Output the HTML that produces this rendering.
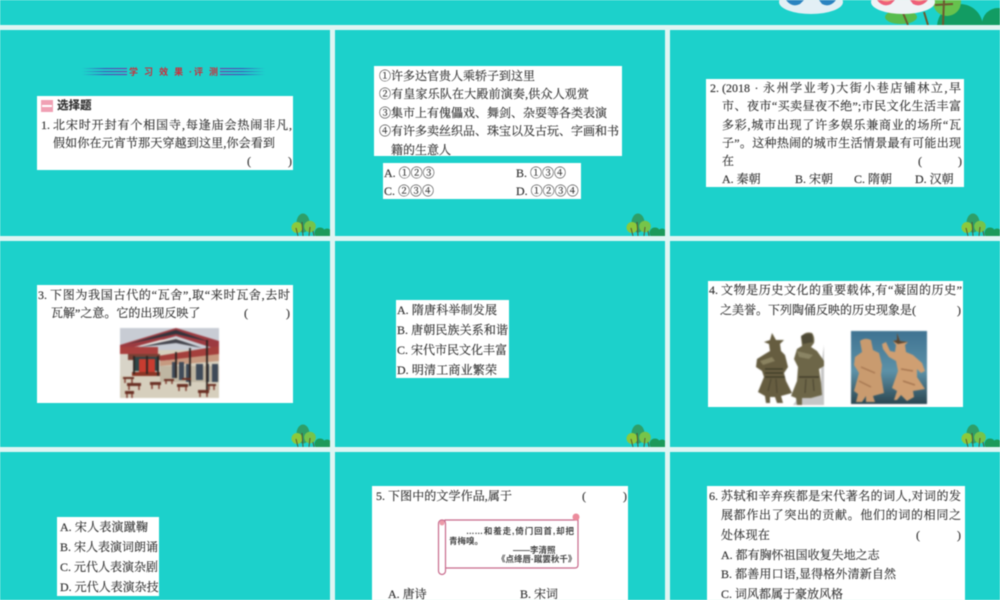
<!DOCTYPE html>
<html lang="zh">
<head>
<meta charset="utf-8">
<title>学习效果·评测</title>
<style>
html,body{margin:0;padding:0;background:#dff5f3}
#w{position:relative;width:1000px;height:600px;overflow:hidden;background:#dff5f3;filter:blur(.4px);font-family:"Liberation Serif","Noto Serif CJK SC",serif;color:#333;font-size:12px;-webkit-text-stroke:.15px #333}
.p{position:absolute;background:#1cd1cb}
.b{position:absolute;background:#fff}
.t{position:absolute;height:18px;line-height:18px;white-space:nowrap;text-align:justify;text-align-last:justify;text-justify:inter-character}
.l{position:absolute;height:18px;line-height:18px;white-space:nowrap}
.s{font-size:8.5px;height:16px;line-height:16px;font-weight:700;font-family:"Liberation Sans","Noto Sans CJK SC",sans-serif;-webkit-text-stroke:0;color:#444}
svg{position:absolute;overflow:hidden}
.im{filter:blur(.5px)}
</style>
</head>
<body>
<div id="w">
<svg width="0" height="0" style="position:absolute"><defs>
<symbol id="tree" viewBox="0 0 40 23">
<circle cx="30" cy="20" r="5.5" fill="#1c9a5a"/><circle cx="37" cy="20" r="4.5" fill="#1c9a5a"/>
<ellipse cx="13" cy="10" rx="6.5" ry="9.5" fill="#2e9f68"/>
<circle cx="7" cy="14.5" r="5.5" fill="#8cc93c"/>
<circle cx="20" cy="13.5" r="5.8" fill="#76c44a"/>
<path d="M8 23L6 15M13 23L12 9M19 23L20 14M24 23L23 18" stroke="#5a4a2a" stroke-width=".9" fill="none"/>
</symbol>
<linearGradient id="gl"><stop offset="0" stop-color="#3f55b8" stop-opacity="0"/><stop offset=".5" stop-color="#3f55b8"/><stop offset="1" stop-color="#7a35a8"/></linearGradient>
<linearGradient id="gr"><stop offset="0" stop-color="#7a35a8"/><stop offset=".5" stop-color="#3f55b8"/><stop offset="1" stop-color="#3f55b8" stop-opacity="0"/></linearGradient>
</defs></svg>

<div class="p" style="left:0;top:0;width:1000px;height:25px"></div>
<div class="p" style="left:0;top:30px;width:330px;height:206px"></div>
<div class="p" style="left:335px;top:30px;width:330px;height:206px"></div>
<div class="p" style="left:670px;top:30px;width:330px;height:206px"></div>
<div class="p" style="left:0;top:241px;width:330px;height:206px"></div>
<div class="p" style="left:335px;top:241px;width:330px;height:206px"></div>
<div class="p" style="left:670px;top:241px;width:330px;height:206px"></div>
<div class="p" style="left:0;top:452px;width:330px;height:148px"></div>
<div class="p" style="left:335px;top:452px;width:330px;height:148px"></div>
<div class="p" style="left:670px;top:452px;width:330px;height:148px"></div>

<!-- top decoration -->
<svg style="left:0;top:0" width="1000" height="25" viewBox="0 0 1000 25">
<ellipse cx="901" cy="17" rx="16" ry="7" fill="#58bc4d"/>
<circle cx="960" cy="27" r="23" fill="#129c63"/>
<circle cx="998" cy="24" r="16" fill="#129c63"/>
<ellipse cx="947" cy="2" rx="14" ry="14" fill="#66c24d"/>
<path d="M903 13l5 12M924 12l4 13M944 0l-1 25M935 5l18-1" stroke="#6d5a30" stroke-width="2" fill="none"/>
<ellipse cx="811" cy="2" rx="32" ry="12" fill="#e3eff5"/>
<path d="M786 0q6 8 14 4l4-4zM819 0l3 4q8 4 14-4z" fill="#2a83c0"/>
<ellipse cx="903" cy="2" rx="32" ry="12" fill="#eef2f5"/>
<path d="M877 0q6 8 14 4l4-4zM910 0l3 4q8 4 15-4z" fill="#ee5f79"/>
<path d="M881 0q5 3 9 1l2-1zM914 0q5 3 10 0z" fill="#f7a58c"/>
</svg>

<!-- trees -->
<svg style="left:290px;top:213px" width="40" height="23"><use href="#tree" width="40" height="23"/></svg>
<svg style="left:625px;top:213px" width="40" height="23"><use href="#tree" width="40" height="23"/></svg>
<svg style="left:960px;top:213px" width="40" height="23"><use href="#tree" width="40" height="23"/></svg>
<svg style="left:290px;top:424px" width="40" height="23"><use href="#tree" width="40" height="23"/></svg>
<svg style="left:625px;top:424px" width="40" height="23"><use href="#tree" width="40" height="23"/></svg>
<svg style="left:960px;top:424px" width="40" height="23"><use href="#tree" width="40" height="23"/></svg>

<!-- heading -->
<svg style="left:82px;top:67px" width="186" height="10" viewBox="0 0 186 10">
<rect x="0" y="1" width="45" height="1.1" fill="url(#gl)"/><rect x="0" y="4" width="45" height="1.1" fill="url(#gl)"/><rect x="0" y="7" width="45" height="1.1" fill="url(#gl)"/>
<rect x="138" y="1" width="45" height="1.1" fill="url(#gr)"/><rect x="138" y="4" width="45" height="1.1" fill="url(#gr)"/><rect x="138" y="7" width="45" height="1.1" fill="url(#gr)"/>
</svg>
<div class="t" style="left:129px;top:63px;width:89px;font-size:9px;font-weight:700;color:#c8303c;-webkit-text-stroke:0;font-family:'Liberation Sans','Noto Sans CJK SC',sans-serif">学 习 效 果 ·评 测</div>

<!-- box 1 -->
<div class="b" style="left:37px;top:96px;width:256px;height:74px"></div>
<div style="position:absolute;left:41px;top:100px;width:12px;height:12px;background:#f0a0b4"></div>
<div style="position:absolute;left:42px;top:105px;width:10px;height:1.5px;background:#fff"></div>
<div class="l" style="left:57px;top:97px;font-size:11.5px;font-weight:700;font-family:'Liberation Sans','Noto Sans CJK SC',sans-serif;color:#333">选择题</div>
<div class="l" style="left:41px;top:116px">1.</div>
<div class="t" style="left:53px;top:116px;width:239px">北宋时开封有个相国寺,每逢庙会热闹非凡,</div>
<div class="t" style="left:53px;top:134px;width:222px">假如你在元宵节那天穿越到这里,你会看到</div>
<div class="l" style="left:247px;top:152px">(</div><div class="l" style="left:288px;top:152px">)</div>

<!-- box 2 -->
<div class="b" style="left:374px;top:66px;width:248px;height:90px"></div>
<div class="t" style="left:379px;top:67px;width:155px">①许多达官贵人乘轿子到这里</div>
<div class="t" style="left:379px;top:85px;width:210px">②有皇家乐队在大殿前演奏,供众人观赏</div>
<div class="t" style="left:379px;top:104px;width:215px">③集市上有傀儡戏、舞剑、杂耍等各类表演</div>
<div class="t" style="left:379px;top:122px;width:239px">④有许多卖丝织品、珠宝以及古玩、字画和书</div>
<div class="t" style="left:391px;top:141px;width:59px">籍的生意人</div>
<div class="b" style="left:383px;top:163px;width:198px;height:36px"></div>
<div class="t" style="left:384px;top:164px;width:50px">A. ①②③</div>
<div class="t" style="left:516px;top:164px;width:49px">B. ①③④</div>
<div class="t" style="left:384px;top:182px;width:49px">C. ②③④</div>
<div class="t" style="left:516px;top:182px;width:62px">D. ①②③④</div>

<!-- box 3 -->
<div class="b" style="left:706px;top:79px;width:258px;height:108px"></div>
<div class="l" style="left:710px;top:79px">2.</div>
<div class="t" style="left:722px;top:79px;width:239px">(2018 · 永州学业考)大街小巷店铺林立,早</div>
<div class="t" style="left:722px;top:97px;width:239px">市、夜市“买卖昼夜不绝”;市民文化生活丰富</div>
<div class="t" style="left:722px;top:116px;width:239px">多彩,城市出现了许多娱乐兼商业的场所“瓦</div>
<div class="t" style="left:722px;top:134px;width:239px">子”。这种热闹的城市生活情景最有可能出现</div>
<div class="l" style="left:722px;top:152px">在</div>
<div class="l" style="left:918px;top:152px">(</div><div class="l" style="left:958px;top:152px">)</div>
<div class="t" style="left:722px;top:170px;width:38px">A. 秦朝</div>
<div class="t" style="left:795px;top:170px;width:37px">B. 宋朝</div>
<div class="t" style="left:854px;top:170px;width:37px">C. 隋朝</div>
<div class="t" style="left:915px;top:170px;width:38px">D. 汉朝</div>

<!-- box 4 -->
<div class="b" style="left:37px;top:285px;width:256px;height:118px"></div>
<div class="l" style="left:38px;top:286px">3.</div>
<div class="t" style="left:50px;top:286px;width:240px">下图为我国古代的“瓦舍”,取“来时瓦舍,去时</div>
<div class="t" style="left:51px;top:304px;width:148px">瓦解”之意。它的出现反映了</div>
<div class="l" style="left:244px;top:304px">(</div><div class="l" style="left:286px;top:304px">)</div>
<svg class="im" style="left:120px;top:328px" width="99" height="70" viewBox="0 0 99 70">
<rect width="99" height="70" fill="#d6cfbd"/>
<rect width="99" height="22" fill="#c8ccd4"/>
<path d="M0 17L56 0L99 13V22L56 8L0 24Z" fill="#9c3a40"/>
<path d="M8 16L56 2L90 14L56 6Z" fill="#33343c"/>
<path d="M14 19L40 12L56 10L86 18L62 12L36 16Z" fill="#e4e0dc"/>
<path d="M20 19L56 11L82 20L56 15Z" fill="#44444c"/>
<path d="M0 19H38V26H0Z" fill="#a9403e"/>
<path d="M38 28L99 18V28L38 33Z" fill="#a4403c"/>
<path d="M40 33L99 26V33L40 38Z" fill="#c69a80"/>
<rect x="0" y="26" width="40" height="22" fill="#d8d4c8"/>
<rect x="8" y="26" width="32" height="6" fill="#7a4034"/>
<rect x="14" y="29" width="25" height="14" fill="#2d4648"/>
<rect x="19" y="31" width="16" height="15" fill="#c83c30"/>
<rect x="12" y="44" width="30" height="4" fill="#8a3424"/>
<rect x="40" y="38" width="59" height="16" fill="#bfb6a2"/>
<path d="M52 34h5v16h-5zM59 34h5v18h-5zM66 36h4v18h-4zM76 36h7v16h-7zM86 36h3v18h-3zM92 36h6v18h-6z" fill="#3f4a58"/>
<path d="M87 12V66M70 20V58M56 24V50M38 28V48M14 28V46M27 28V46" stroke="#2b2320" stroke-width="1.8" fill="none"/>
<path d="M3 49h11v2H3zM7 55h14v3H7zM30 54h11v3H30zM44 51h10v2H44zM57 56h11v3H57zM62 50h9v2H62zM78 62h11v3H78zM87 56h9v2H87zM5 63h9v3H5z" fill="#6a3024"/>
<path d="M5 51v4M12 51v4M9 58v4M19 58v4M32 57v4M39 57v4M46 53v3M52 53v3M59 59v4M66 59v4M80 65v4M87 65v4M89 58v4M94 58v4M7 66v4M12 66v4" stroke="#7a3528" stroke-width="1.4"/>
</svg>

<!-- box 5 -->
<div class="b" style="left:396px;top:300px;width:113px;height:78px"></div>
<div class="t" style="left:397px;top:301px;width:100px">A. 隋唐科举制发展</div>
<div class="t" style="left:397px;top:321px;width:111px">B. 唐朝民族关系和谐</div>
<div class="t" style="left:397px;top:341px;width:110px">C. 宋代市民文化丰富</div>
<div class="t" style="left:397px;top:361px;width:100px">D. 明清工商业繁荣</div>

<!-- box 6 -->
<div class="b" style="left:708px;top:281px;width:255px;height:126px"></div>
<div class="l" style="left:709px;top:281px">4.</div>
<div class="t" style="left:721px;top:281px;width:241px">文物是历史文化的重要载体,有“凝固的历史”</div>
<div class="t" style="left:720px;top:301px;width:196px">之美誉。下列陶俑反映的历史现象是(</div>
<div class="l" style="left:957px;top:301px">)</div>
<svg class="im" style="left:755px;top:331px" width="70" height="76" viewBox="0 0 70 76">
<path d="M69 14V74H38L44 66L66 60V36Z" fill="#c6c6c6"/>
<path d="M46 6Q50 0 57 2Q60 6 59 12L56 16L62 20L69 30L69 35L64 38L66 52L67 64L56 67H47V74H42L41 67L36 65L42 50L43 36L39 28L42 18L47 15Z" fill="#6d6648"/>
<path d="M17 2L21 9L29 9L25 13L26 20L30 24L33 36L29 42L31 50L37 62L26 65L28 72H22L20 66H15V72H11L10 65L3 61L9 46L7 40L1 36L2 28L10 23L15 20L14 13L9 11L15 9Z" fill="#665d40"/>
<path d="M46 5Q50 2 57 3L58 11L48 13Z" fill="#4e4a36"/>
<path d="M42 20L58 24L54 28L44 26Z" fill="#8a8464"/>
<path d="M10 38h18M10 42h18M10 46h20M44 46h20" stroke="#3c3826" stroke-width="1.2"/>
<path d="M5 30L17 26L20 30L8 34Z" fill="#8a8260"/>
<path d="M13 60L16 48M22 62L21 48M50 62L51 48M59 60L58 48" stroke="#4a4430" stroke-width="1"/>
</svg>
<svg class="im" style="left:851px;top:331px" width="76" height="73" viewBox="0 0 76 73">
<defs><linearGradient id="bg" x1="0" y1="0" x2="0" y2="1"><stop offset="0" stop-color="#3f7392"/><stop offset=".55" stop-color="#5d92a8"/><stop offset="1" stop-color="#2b4650"/></linearGradient></defs>
<rect width="76" height="73" fill="url(#bg)"/>
<path d="M9 10Q14 6 20 9L22 19L28 22L31 34L30 44L33 62L22 65L24 71H15L15 65L11 71H5L7 63L3 60L8 42L3 34L4 26L11 21Z" fill="#c99b6f"/>
<path d="M46 2L49 10L57 11L54 14L55 21L62 24L71 32L74 40L70 42L66 38L66 46L74 58L62 60L63 66L56 70L50 64L46 69H43L46 60L41 57L47 40L45 30L38 26L32 18L31 13L35 11L39 20L44 21L45 14L42 10L46 9Z" fill="#cf9f72"/>
<path d="M46 2L49 10L57 11L47 13L42 10L46 9Z" fill="#5a4632"/>
<path d="M10 36L24 42M50 38L62 40M8 50L20 56M52 50L64 54" stroke="#a0704c" stroke-width="1.2"/>
</svg>

<!-- box 7 -->
<div class="b" style="left:57px;top:517px;width:102px;height:79px"></div>
<div class="t" style="left:60px;top:518px;width:88px">A. 宋人表演蹴鞠</div>
<div class="t" style="left:60px;top:538px;width:98px">B. 宋人表演词朗诵</div>
<div class="t" style="left:60px;top:558px;width:97px">C. 元代人表演杂剧</div>
<div class="t" style="left:60px;top:578px;width:98px">D. 元代人表演杂技</div>

<!-- box 8 -->
<div class="b" style="left:372px;top:486px;width:256px;height:114px"></div>
<div class="l" style="left:376px;top:487px">5.</div>
<div class="t" style="left:388px;top:487px;width:124px">下图中的文学作品,属于</div>
<div class="l" style="left:582px;top:487px">(</div><div class="l" style="left:623px;top:487px">)</div>
<svg style="left:437px;top:513px" width="146" height="64" viewBox="0 0 146 64">
<path d="M8 7H141V52Q141 55 138 55H8Z" fill="#fff" stroke="#c86a8c" stroke-width="1.2"/>
<rect x="1.5" y="7" width="7" height="54.5" rx="3.5" fill="#fff" stroke="#c86a8c" stroke-width="1.2"/>
<circle cx="5" cy="10" r="2.5" fill="#ec9aa8"/>
<circle cx="139" cy="4" r="3.5" fill="#ec8b9c"/>
</svg>
<div class="t s" style="left:466px;top:523px;width:108px">……和羞走,倚门回首,却把</div>
<div class="l s" style="left:449px;top:533px">青梅嗅。</div>
<div class="l s" style="left:513px;top:542px">——李清照</div>
<div class="l s" style="left:497px;top:551px">《点绛唇·蹴罢秋千》</div>
<div class="t" style="left:388px;top:585px;width:38px">A. 唐诗</div>
<div class="t" style="left:520px;top:585px;width:37px">B. 宋词</div>

<!-- box 9 -->
<div class="b" style="left:707px;top:486px;width:258px;height:114px"></div>
<div class="l" style="left:709px;top:487px">6.</div>
<div class="t" style="left:721px;top:487px;width:240px">苏轼和辛弃疾都是宋代著名的词人,对词的发</div>
<div class="t" style="left:721px;top:506px;width:240px">展都作出了突出的贡献。他们的词的相同之</div>
<div class="l" style="left:721px;top:526px;letter-spacing:.3px">处体现在</div>
<div class="l" style="left:916px;top:526px">(</div><div class="l" style="left:957px;top:526px">)</div>
<div class="t" style="left:721px;top:546px;width:158px">A. 都有胸怀祖国收复失地之志</div>
<div class="t" style="left:721px;top:565px;width:175px">B. 都善用口语,显得格外清新自然</div>
<div class="t" style="left:721px;top:585px;width:121px">C. 词风都属于豪放风格</div>
</div>
</body>
</html>
